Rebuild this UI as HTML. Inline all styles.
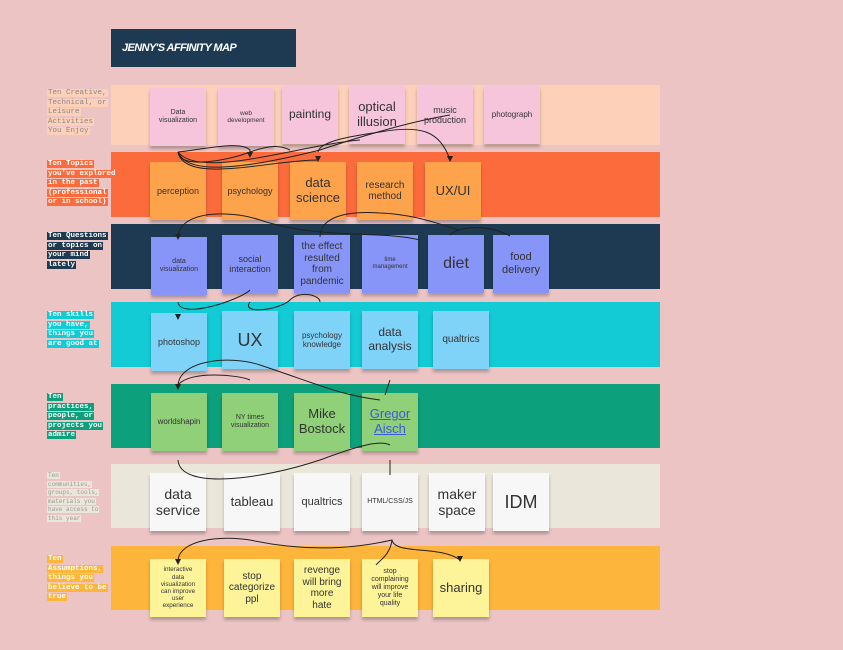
<!DOCTYPE html>
<html><head><meta charset="utf-8"><style>
body{margin:0;width:843px;height:650px;background:#ecc4c4;position:relative;overflow:hidden;font-family:"Liberation Sans",sans-serif}
.band{position:absolute;left:111px;width:549px}
.n{position:absolute;width:56px;height:58px;display:flex;align-items:center;justify-content:center;text-align:center;color:#333;line-height:1.15;box-shadow:0 3px 3px rgba(0,0,0,.25)}
.l{position:absolute;left:47px;font-family:"Liberation Mono",monospace;font-size:7.5px;line-height:9.5px;width:80px}
.l span{padding:0 1px}
</style></head><body>
<div style="position:absolute;left:111px;top:29px;width:185px;height:38px;background:#1e3a52;color:#fff;font-weight:bold;font-style:italic;font-size:11px;line-height:38px;padding-left:11px;box-sizing:border-box;letter-spacing:-.6px;transform-origin:left;">JENNY'S AFFINITY MAP</div>

<div class="band" style="top:85px;height:60px;background:#fdd0b9"></div>
<div class="band" style="top:152px;height:65px;background:#fc6b3b"></div>
<div class="band" style="top:224px;height:65px;background:#1e3a52"></div>
<div class="band" style="top:302px;height:65px;background:#12cbd5"></div>
<div class="band" style="top:384px;height:64px;background:#0da07c"></div>
<div class="band" style="top:464px;height:64px;background:#ebe6da"></div>
<div class="band" style="top:546px;height:64px;background:#fdb53b"></div>

<div class="l" style="top:89px;color:#888"><span style="background:#fdd0b9">Ten Creative,</span><br><span style="background:#fdd0b9">Technical, or</span><br><span style="background:#fdd0b9">Leisure</span><br><span style="background:#fdd0b9">Activities</span><br><span style="background:#fdd0b9">You Enjoy</span></div>
<div class="l" style="top:160px;color:#fff;font-weight:bold"><span style="background:#fc6b3b">Ten Topics</span><br><span style="background:#fc6b3b">you've explored</span><br><span style="background:#fc6b3b">in the past</span><br><span style="background:#fc6b3b">(professional</span><br><span style="background:#fc6b3b">or in school)</span></div>
<div class="l" style="top:232px;color:#fff;font-weight:bold"><span style="background:#1e3a52">Ten Questions</span><br><span style="background:#1e3a52">or topics on</span><br><span style="background:#1e3a52">your mind</span><br><span style="background:#1e3a52">lately</span></div>
<div class="l" style="top:311px;color:#fff;font-weight:bold"><span style="background:#12cbd5">Ten skills</span><br><span style="background:#12cbd5">you have,</span><br><span style="background:#12cbd5">things you</span><br><span style="background:#12cbd5">are good at</span></div>
<div class="l" style="top:393px;color:#fff;font-weight:bold"><span style="background:#0da07c">Ten</span><br><span style="background:#0da07c">practices,</span><br><span style="background:#0da07c">people, or</span><br><span style="background:#0da07c">projects you</span><br><span style="background:#0da07c">admire</span></div>
<div class="l" style="top:472px;color:#999;font-size:6px;line-height:8.6px"><span style="background:#ebe6da">Ten</span><br><span style="background:#ebe6da">communities,</span><br><span style="background:#ebe6da">groups, tools,</span><br><span style="background:#ebe6da">materials you</span><br><span style="background:#ebe6da">have access to</span><br><span style="background:#ebe6da">this year</span></div>
<div class="l" style="top:555px;color:#fff;font-weight:bold"><span style="background:#fdb53b">Ten</span><br><span style="background:#fdb53b">Assumptions,</span><br><span style="background:#fdb53b">things you</span><br><span style="background:#fdb53b">believe to be</span><br><span style="background:#fdb53b">true</span></div>

<!-- row1 -->
<div class="n" style="left:150px;top:88px;background:#f6c5dc;font-size:7px">Data<br>visualization</div>
<div class="n" style="left:218px;top:88px;background:#f6c5dc;font-size:6.5px">web<br>development</div>
<div class="n" style="left:282px;top:86px;background:#f6c5dc;font-size:12px">painting</div>
<div class="n" style="left:349px;top:86px;background:#f6c5dc;font-size:13px">optical<br>illusion</div>
<div class="n" style="left:417px;top:86px;background:#f6c5dc;font-size:9px">music<br>production</div>
<div class="n" style="left:484px;top:86px;background:#f6c5dc;font-size:8px">photograph</div>
<!-- row2 -->
<div class="n" style="left:150px;top:162px;background:#fca34b;font-size:9px">perception</div>
<div class="n" style="left:222px;top:162px;background:#fca34b;font-size:9px">psychology</div>
<div class="n" style="left:290px;top:162px;background:#fca34b;font-size:13px">data<br>science</div>
<div class="n" style="left:357px;top:162px;background:#fca34b;font-size:10px">research<br>method</div>
<div class="n" style="left:425px;top:162px;background:#fca34b;font-size:13px">UX/UI</div>
<!-- row3 -->
<div class="n" style="left:151px;top:237px;background:#8794f8;font-size:7px">data<br>visualization</div>
<div class="n" style="left:222px;top:235px;background:#8794f8;font-size:9px">social<br>interaction</div>
<div class="n" style="left:294px;top:235px;background:#8794f8;font-size:10px">the effect<br>resulted<br>from<br>pandemic</div>
<div class="n" style="left:362px;top:235px;background:#8794f8;font-size:6px">time<br>management</div>
<div class="n" style="left:428px;top:235px;background:#8794f8;font-size:16px">diet</div>
<div class="n" style="left:493px;top:235px;background:#8794f8;font-size:11px">food<br>delivery</div>
<!-- row4 -->
<div class="n" style="left:151px;top:313px;background:#80d3f8;font-size:9px">photoshop</div>
<div class="n" style="left:222px;top:311px;background:#80d3f8;font-size:18px">UX</div>
<div class="n" style="left:294px;top:311px;background:#80d3f8;font-size:8px">psychology<br>knowledge</div>
<div class="n" style="left:362px;top:311px;background:#80d3f8;font-size:12px">data<br>analysis</div>
<div class="n" style="left:433px;top:311px;background:#80d3f8;font-size:10px">qualtrics</div>
<!-- row5 -->
<div class="n" style="left:151px;top:393px;background:#8fd079;font-size:8px">worldshapin</div>
<div class="n" style="left:222px;top:393px;background:#8fd079;font-size:7px">NY times<br>visualization</div>
<div class="n" style="left:294px;top:393px;background:#8fd079;font-size:13px">Mike<br>Bostock</div>
<div class="n" style="left:362px;top:393px;background:#8fd079;font-size:13px;color:#3a5ad8;text-decoration:underline">Gregor<br>Aisch</div>
<!-- row6 -->
<div class="n" style="left:150px;top:473px;background:#f7f7f7;font-size:14px">data<br>service</div>
<div class="n" style="left:224px;top:473px;background:#f7f7f7;font-size:13px">tableau</div>
<div class="n" style="left:294px;top:473px;background:#f7f7f7;font-size:11px">qualtrics</div>
<div class="n" style="left:362px;top:473px;background:#f7f7f7;font-size:7px">HTML/CSS/JS</div>
<div class="n" style="left:429px;top:473px;background:#f7f7f7;font-size:14px">maker<br>space</div>
<div class="n" style="left:493px;top:473px;background:#f7f7f7;font-size:18px">IDM</div>
<!-- row7 -->
<div class="n" style="left:150px;top:559px;background:#fdf49a;font-size:6.3px">interactive<br>data<br>visualization<br>can improve<br>user<br>experience</div>
<div class="n" style="left:224px;top:559px;background:#fdf49a;font-size:10px">stop<br>categorize<br>ppl</div>
<div class="n" style="left:294px;top:559px;background:#fdf49a;font-size:10px">revenge<br>will bring<br>more<br>hate</div>
<div class="n" style="left:362px;top:559px;background:#fdf49a;font-size:7px">stop<br>complaining<br>will improve<br>your life<br>quality</div>
<div class="n" style="left:433px;top:559px;background:#fdf49a;font-size:13px">sharing</div>

<svg width="843" height="650" style="position:absolute;left:0;top:0" fill="none" stroke="#222" stroke-width="1">
<path d="M178 152 C180 170 230 160 250 152 C270 145 280 145 290 150"/>
<path d="M178 152 C200 150 240 140 250 150 L250 155"/>
<path d="M178 152 C185 185 270 160 318 160 M318 152 C320 140 360 135 380 132 C420 125 440 130 450 160"/>
<path d="M178 152 C200 180 300 145 360 140"/>
<path d="M178 152 C185 170 220 175 320 150 C380 130 420 120 450 115"/>
<path d="M178 237 C180 210 230 210 260 220 C320 240 380 230 420 240"/>
<path d="M320 237 C320 220 340 210 380 213 C420 215 440 225 460 230"/>
<path d="M450 235 C460 225 490 225 510 236"/>
<path d="M178 302 C180 320 240 300 250 290 M250 302 C240 315 280 310 290 300 C300 290 320 295 320 302"/>
<path d="M178 385 C180 360 230 355 260 365 C320 385 340 395 380 400"/>
<path d="M178 385 C190 370 240 375 250 380"/>
<path d="M390 380 L385 395"/>
<path d="M178 460 C180 490 260 480 320 460 C360 445 380 440 390 445"/>
<path d="M390 460 L390 475"/>
<path d="M178 560 C180 540 220 535 250 540 C320 555 370 545 392 540 C395 555 440 545 460 560"/>
<path d="M392 540 C390 555 380 560 376 565"/>
<g fill="#222" stroke="none">
<path d="M178 240 l-3-6 h6z"/><path d="M178 320 l-3-6 h6z"/><path d="M178 390 l-3-6 h6z"/><path d="M178 565 l-3-6 h6z"/><path d="M318 162 l-3-6 h6z"/><path d="M450 162 l-3-6 h6z"/><path d="M250 158 l-3-6 h6z"/><path d="M460 562 l-3-6 h6z"/>
</g>
</svg>
</body></html>
